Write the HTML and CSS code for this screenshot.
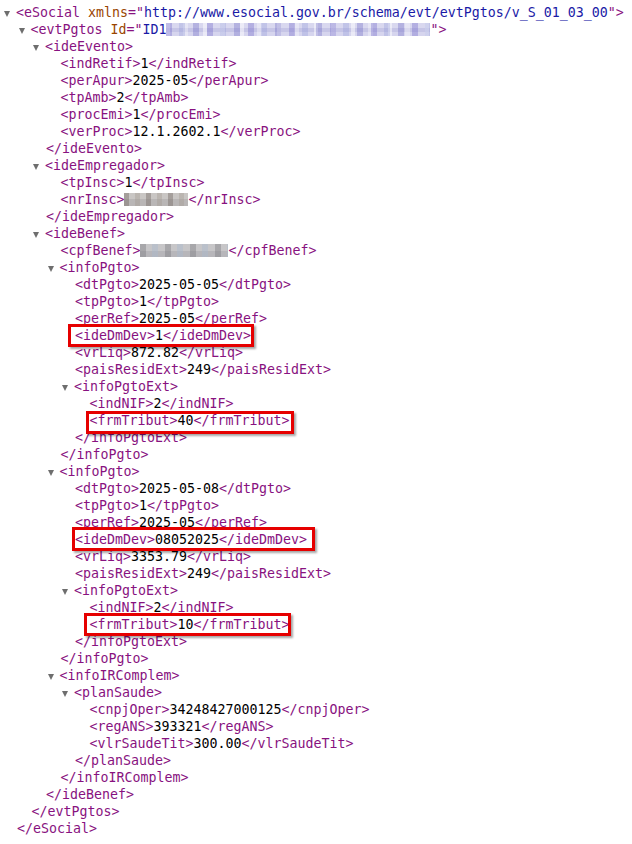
FILE: index.html
```html
<!DOCTYPE html>
<html lang="en">

<head>
    <meta charset="UTF-8">
    <title>evtPgtos</title>
    <link rel="stylesheet" href="styles.css">
</head>

<body>
    <div class="tree">
        <div class="line"><span class="fold"></span>&lt;eSocial <span class="attr">xmlns</span>="<span class="val">http://www.esocial.gov.br/schema/evt/evtPgtos/v_S_01_03_00</span>"&gt;</div>
        <div class="kids">
            <div class="line"><span class="fold"></span>&lt;evtPgtos <span class="attr">Id</span>="<span class="val">ID1<span class="blur blur-id"></span></span>"&gt;</div>
            <div class="kids">
                <div class="line"><span class="fold"></span>&lt;ideEvento&gt;</div>
                <div class="kids">
                    <div class="line">&lt;indRetif&gt;<span class="txt">1</span>&lt;/indRetif&gt;</div>
                    <div class="line">&lt;perApur&gt;<span class="txt">2025-05</span>&lt;/perApur&gt;</div>
                    <div class="line">&lt;tpAmb&gt;<span class="txt">2</span>&lt;/tpAmb&gt;</div>
                    <div class="line">&lt;procEmi&gt;<span class="txt">1</span>&lt;/procEmi&gt;</div>
                    <div class="line">&lt;verProc&gt;<span class="txt">12.1.2602.1</span>&lt;/verProc&gt;</div>
                </div>
                <div class="line">&lt;/ideEvento&gt;</div>

                <div class="line"><span class="fold"></span>&lt;ideEmpregador&gt;</div>
                <div class="kids">
                    <div class="line">&lt;tpInsc&gt;<span class="txt">1</span>&lt;/tpInsc&gt;</div>
                    <div class="line">&lt;nrInsc&gt;<span class="blur blur-cnpj"></span>&lt;/nrInsc&gt;</div>
                </div>
                <div class="line">&lt;/ideEmpregador&gt;</div>

                <div class="line"><span class="fold"></span>&lt;ideBenef&gt;</div>
                <div class="kids">
                    <div class="line">&lt;cpfBenef&gt;<span class="blur blur-cpf"></span>&lt;/cpfBenef&gt;</div>

                    <div class="line"><span class="fold"></span>&lt;infoPgto&gt;</div>
                    <div class="kids">
                        <div class="line">&lt;dtPgto&gt;<span class="txt">2025-05-05</span>&lt;/dtPgto&gt;</div>
                        <div class="line">&lt;tpPgto&gt;<span class="txt">1</span>&lt;/tpPgto&gt;</div>
                        <div class="line">&lt;perRef&gt;<span class="txt">2025-05</span>&lt;/perRef&gt;</div>
                        <div class="line"><span class="mark mark-dev1">&lt;ideDmDev&gt;<span class="txt">1</span>&lt;/ideDmDev&gt;</span></div>
                        <div class="line">&lt;vrLiq&gt;<span class="txt">872.82</span>&lt;/vrLiq&gt;</div>
                        <div class="line">&lt;paisResidExt&gt;<span class="txt">249</span>&lt;/paisResidExt&gt;</div>
                        <div class="line"><span class="fold"></span>&lt;infoPgtoExt&gt;</div>
                        <div class="kids">
                            <div class="line">&lt;indNIF&gt;<span class="txt">2</span>&lt;/indNIF&gt;</div>
                            <div class="line"><span class="mark mark-trib1">&lt;frmTribut&gt;<span class="txt">40</span>&lt;/frmTribut&gt;</span></div>
                        </div>
                        <div class="line">&lt;/infoPgtoExt&gt;</div>
                    </div>
                    <div class="line">&lt;/infoPgto&gt;</div>

                    <div class="line"><span class="fold"></span>&lt;infoPgto&gt;</div>
                    <div class="kids">
                        <div class="line">&lt;dtPgto&gt;<span class="txt">2025-05-08</span>&lt;/dtPgto&gt;</div>
                        <div class="line">&lt;tpPgto&gt;<span class="txt">1</span>&lt;/tpPgto&gt;</div>
                        <div class="line">&lt;perRef&gt;<span class="txt">2025-05</span>&lt;/perRef&gt;</div>
                        <div class="line"><span class="mark mark-dev2">&lt;ideDmDev&gt;<span class="txt">08052025</span>&lt;/ideDmDev&gt;</span></div>
                        <div class="line">&lt;vrLiq&gt;<span class="txt">3353.79</span>&lt;/vrLiq&gt;</div>
                        <div class="line">&lt;paisResidExt&gt;<span class="txt">249</span>&lt;/paisResidExt&gt;</div>
                        <div class="line"><span class="fold"></span>&lt;infoPgtoExt&gt;</div>
                        <div class="kids">
                            <div class="line">&lt;indNIF&gt;<span class="txt">2</span>&lt;/indNIF&gt;</div>
                            <div class="line"><span class="mark mark-trib2">&lt;frmTribut&gt;<span class="txt">10</span>&lt;/frmTribut&gt;</span></div>
                        </div>
                        <div class="line">&lt;/infoPgtoExt&gt;</div>
                    </div>
                    <div class="line">&lt;/infoPgto&gt;</div>

                    <div class="line"><span class="fold"></span>&lt;infoIRComplem&gt;</div>
                    <div class="kids">
                        <div class="line"><span class="fold"></span>&lt;planSaude&gt;</div>
                        <div class="kids">
                            <div class="line">&lt;cnpjOper&gt;<span class="txt">34248427000125</span>&lt;/cnpjOper&gt;</div>
                            <div class="line">&lt;regANS&gt;<span class="txt">393321</span>&lt;/regANS&gt;</div>
                            <div class="line">&lt;vlrSaudeTit&gt;<span class="txt">300.00</span>&lt;/vlrSaudeTit&gt;</div>
                        </div>
                        <div class="line">&lt;/planSaude&gt;</div>
                    </div>
                    <div class="line">&lt;/infoIRComplem&gt;</div>
                </div>
                <div class="line">&lt;/ideBenef&gt;</div>
            </div>
            <div class="line">&lt;/evtPgtos&gt;</div>
        </div>
        <div class="line">&lt;/eSocial&gt;</div>
    </div>
</body>

</html>
```

FILE: styles.css
```css
body {
    margin: 0;
    padding: 0;
    background-color: #fff;
    font-family: "DejaVu Sans Mono", "Liberation Mono", monospace;
    font-size: 13.29px;
    line-height: 17px;
}

.tree {
    padding: 4px 0 0 17px;
}

.kids {
    margin-left: 14.5px;
}

.line {
    color: rgb(136, 18, 128);
    white-space: pre;
}

.attr {
    color: rgb(153, 69, 0);
}

.val {
    color: rgb(26, 26, 166);
}

.txt {
    color: #000;
}

/* collapse arrow */
.fold {
    display: inline-block;
    width: 0;
    height: 0;
    border-left: 3.5px solid transparent;
    border-right: 3.5px solid transparent;
    border-top: 6px solid #6e6e6e;
    margin-left: -13px;
    margin-right: 6px;
    vertical-align: 0;
}

/* pixelated (hidden) values */
.blur {
    display: inline-block;
    height: 13px;
    vertical-align: -2px;
}

.blur-id {
    width: 264px;
    background:
        repeating-linear-gradient(90deg, rgba(110, 100, 200, 0.35) 0 6px, transparent 6px 13px, rgba(140, 150, 215, 0.3) 13px 19px, transparent 19px 27px, rgba(95, 90, 190, 0.3) 27px 33px, transparent 33px 41px),
        repeating-linear-gradient(90deg, rgba(255, 255, 255, 0.5) 0 4px, transparent 4px 17px, rgba(255, 255, 255, 0.35) 17px 22px, transparent 22px 37px),
        linear-gradient(180deg, #d9d8ef 0 35%, #c6c5e6 35% 70%, #d6d5ee 70% 100%);
}

.blur-cnpj {
    width: 64px;
    background:
        repeating-linear-gradient(90deg, rgba(120, 110, 105, 0.45) 0 5px, transparent 5px 11px, rgba(160, 150, 140, 0.35) 11px 16px, transparent 16px 22px),
        linear-gradient(180deg, #c9c6c4 0 50%, #b9b6b6 50% 100%);
}

.blur-cpf {
    width: 88px;
    background:
        repeating-linear-gradient(90deg, rgba(120, 120, 125, 0.4) 0 6px, transparent 6px 12px, rgba(170, 185, 205, 0.45) 12px 18px, transparent 18px 25px),
        linear-gradient(180deg, #c7c6c8 0 50%, #b7b6ba 50% 100%);
}

/* red highlight boxes */
.mark {
    position: relative;
    display: inline-block;
}

.mark::after {
    content: "";
    position: absolute;
    top: -3px;
    bottom: -3px;
    left: -7px;
    right: -3px;
    border: 3px solid #e60000;
    box-shadow: 2px 2px 2px rgba(0, 0, 0, 0.35);
}

.mark-trib1::after {
    top: -1px;
    bottom: -5px;
    left: -4px;
    right: -5px;
}

.mark-dev2::after {
    top: -4px;
    bottom: -3px;
    left: -3px;
    right: -8px;
}

.mark-trib2::after {
    left: -6px;
    right: -2px;
}
```
